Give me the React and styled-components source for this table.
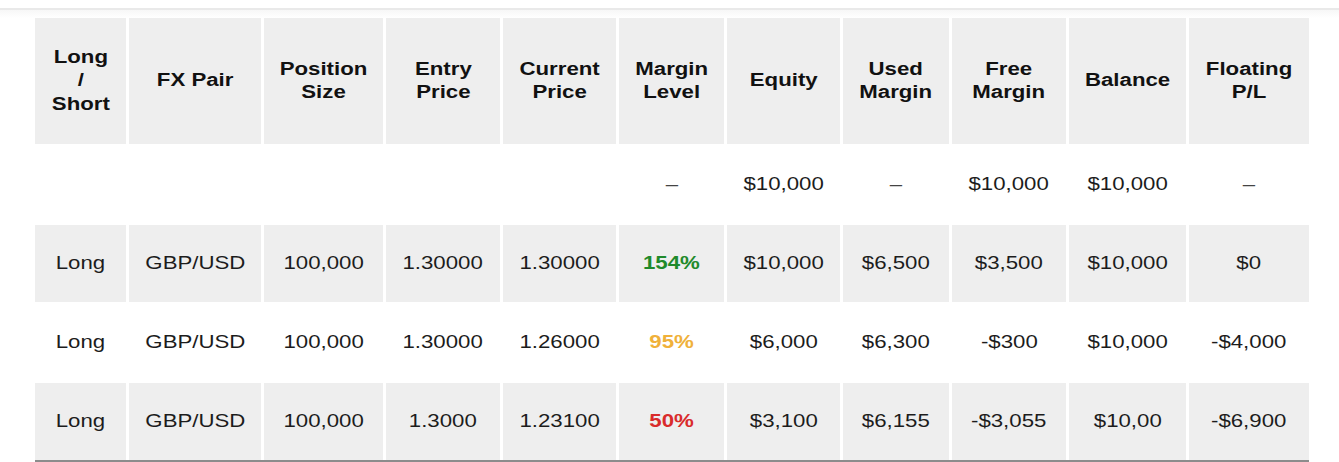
import React from 'react';
import styled, { createGlobalStyle } from 'styled-components';

const GlobalStyle = createGlobalStyle`
  html, body {
    margin: 0;
    padding: 0;
    background: #ffffff;
  }
  body {
    font-family: "Liberation Sans", Arial, sans-serif;
    color: #1a1a1a;
  }
`;

const Page = styled.div`
  width: 1339px;
  height: 462px;
  overflow: hidden;
  background: #fff;
`;

const TopRule = styled.div`
  height: 8px;
  border-bottom: 2px solid #e9e9e9;
  background: #fff;
  & + div {
    background: linear-gradient(#f7f7f7, #fff 8px);
  }
`;

const Wrap = styled.div`
  padding: 8px 0 0 35px;
`;

const Grid = styled.div`
  display: grid;
  width: 1274px;
  grid-template-columns: 91px 132px 119px 114px 113px 105px 113px 106px 114px 117px 120px;
  grid-template-rows: 126px repeat(4, 77px);
  column-gap: 3px;
  row-gap: 2px;
  border-bottom: 2px solid #8c8c8c;
`;

const HeadCell = styled.div`
  background: #eeeeee;
  display: flex;
  align-items: center;
  justify-content: center;
  text-align: center;
  font-weight: bold;
  font-size: 17.5px;
  line-height: 23.5px;
  color: #111;
`;

const Cell = styled.div`
  background: ${p => (p.$shaded ? '#eeeeee' : '#ffffff')};
  display: flex;
  align-items: center;
  justify-content: center;
  font-size: 17.5px;
  color: ${p => p.$color || '#1c1c1c'};
  font-weight: ${p => (p.$color ? 'bold' : 'normal')};
`;

const Text = styled.span`
  display: inline-block;
  transform: scaleX(1.27);
  white-space: nowrap;
`;

const Dash = styled.span`
  display: inline-block;
  color: #444;
  transform: scaleX(1.27);
`;

const headers = [
  ['Long', '/', 'Short'],
  ['FX Pair'],
  ['Position', 'Size'],
  ['Entry', 'Price'],
  ['Current', 'Price'],
  ['Margin', 'Level'],
  ['Equity'],
  ['Used', 'Margin'],
  ['Free', 'Margin'],
  ['Balance'],
  ['Floating', 'P/L']
];

const levelColors = {
  green: '#1f8a2b',
  orange: '#f0b13a',
  red: '#d92b2b'
};

const rows = [
  { cells: ['', '', '', '', '', '–', '$10,000', '–', '$10,000', '$10,000', '–'] },
  {
    cells: ['Long', 'GBP/USD', '100,000', '1.30000', '1.30000', '154%', '$10,000', '$6,500', '$3,500', '$10,000', '$0'],
    level: 'green'
  },
  {
    cells: ['Long', 'GBP/USD', '100,000', '1.30000', '1.26000', '95%', '$6,000', '$6,300', '-$300', '$10,000', '-$4,000'],
    level: 'orange'
  },
  {
    cells: ['Long', 'GBP/USD', '100,000', '1.3000', '1.23100', '50%', '$3,100', '$6,155', '-$3,055', '$10,00', '-$6,900'],
    level: 'red'
  }
];

export default function App() {
  return (
    <Page>
      <GlobalStyle />
      <TopRule />
      <Wrap>
        <Grid>
          {headers.map((lines, i) => (
            <HeadCell key={'h' + i}>
              <Text>
                {lines.map((line, j) => (
                  <React.Fragment key={j}>
                    {j > 0 && <br />}
                    {line}
                  </React.Fragment>
                ))}
              </Text>
            </HeadCell>
          ))}
          {rows.map((row, r) =>
            row.cells.map((value, c) => (
              <Cell
                key={r + '-' + c}
                $shaded={r % 2 === 1}
                $color={c === 5 && row.level ? levelColors[row.level] : null}
              >
                {value === '–' ? <Dash>{value}</Dash> : <Text>{value}</Text>}
              </Cell>
            ))
          )}
        </Grid>
      </Wrap>
    </Page>
  );
}
